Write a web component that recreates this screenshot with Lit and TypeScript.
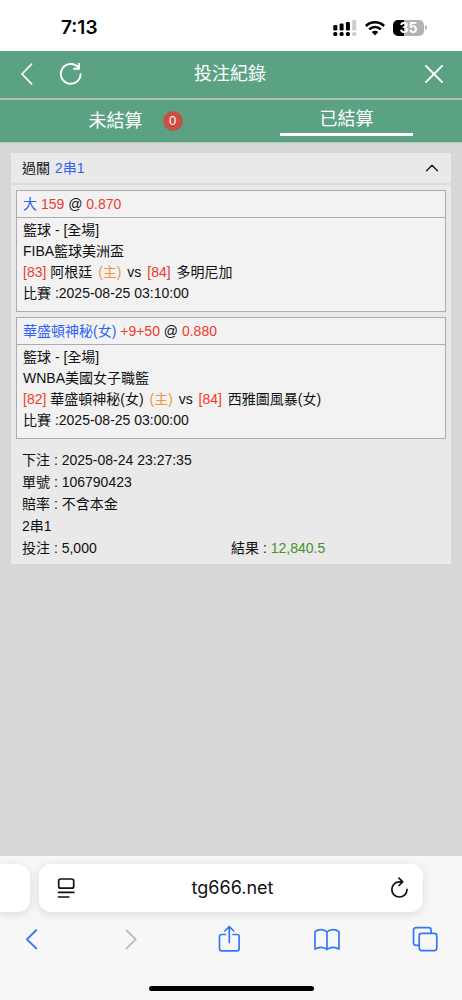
import { LitElement, html, css, svg, nothing } from "lit";
import { customElement, property, state } from "lit/decorators.js";

interface Team {
  no: string;
  name: string;
}

interface Leg {
  pick: string;
  line: string;
  odds: string;
  sport: string;
  league: string;
  home: Team;
  away: Team;
  time: string;
}

const LEGS: Leg[] = [
  {
    pick: "大",
    line: "159",
    odds: "0.870",
    sport: "籃球 - [全場]",
    league: "FIBA籃球美洲盃",
    home: { no: "[83]", name: "阿根廷" },
    away: { no: "[84]", name: "多明尼加" },
    time: "2025-08-25 03:10:00",
  },
  {
    pick: "華盛頓神秘(女)",
    line: "+9+50",
    odds: "0.880",
    sport: "籃球 - [全場]",
    league: "WNBA美國女子職籃",
    home: { no: "[82]", name: "華盛頓神秘(女)" },
    away: { no: "[84]", name: "西雅圖風暴(女)" },
    time: "2025-08-25 03:00:00",
  },
];

const resets = css`
  * {
    box-sizing: border-box;
  }
  button {
    margin: 0;
    padding: 0;
    border: 0;
    background: none;
    font: inherit;
    color: inherit;
    cursor: pointer;
  }
  svg {
    display: block;
    fill: none;
    stroke: currentColor;
    stroke-linecap: round;
    stroke-linejoin: round;
  }
`;

@customElement("status-bar")
class StatusBar extends LitElement {
  static styles = [
    resets,
    css`
      :host {
        display: flex;
        justify-content: space-between;
        align-items: center;
        height: 51px;
        padding: 4px 35px 0 61px;
        background: #fff;
        color: #000;
      }
      .time {
        font: 600 19px/24px Inter, sans-serif;
      }
      .icons {
        display: flex;
        align-items: center;
        gap: 8px;
      }
      .solid {
        fill: currentColor;
        stroke: none;
      }
      .faint {
        fill: #cbcbcb;
      }
      .battery {
        display: flex;
        align-items: center;
        gap: 1px;
      }
      .cell {
        width: 31px;
        height: 16px;
        border-radius: 5px;
        background: linear-gradient(90deg, #000 35%, #b3b3b3 35%);
        color: #fff;
        text-align: center;
        font: 700 14px/16px Inter, sans-serif;
      }
      .nub {
        width: 2px;
        height: 5px;
        border-radius: 0 2px 2px 0;
        background: #b3b3b3;
      }
    `,
  ];

  render() {
    return html`
      <span class="time">7:13</span>
      <span class="icons">
        <svg class="solid" width="24" height="16" viewBox="0 0 24 16" aria-hidden="true">
          <rect x="0.3" y="5" width="4" height="5.4" rx="1.2" />
          <rect x="6.6" y="3.6" width="4" height="6.8" rx="1.2" />
          <rect x="12.9" y="2" width="4" height="8.4" rx="1.2" />
          <rect class="faint" x="19.2" y="0" width="4" height="10.4" rx="1.2" />
          <rect x="0.3" y="12" width="4" height="4" rx="1.5" />
          <rect x="6.6" y="12" width="4" height="4" rx="1.5" />
          <rect x="12.9" y="12" width="4" height="4" rx="1.5" />
          <rect class="faint" x="19.2" y="12" width="4" height="4" rx="1.5" />
        </svg>
        <svg width="20" height="16" viewBox="0 0 20 16" stroke-width="2.6" aria-hidden="true">
          <path stroke-linecap="butt" d="M0.9 6a13 13 0 0 1 18.2 0M4.2 9.4a8.3 8.3 0 0 1 11.6 0" />
          <path class="solid" d="M10 15.4 6.8 12.1a4.6 4.6 0 0 1 6.4 0Z" />
        </svg>
        <span class="battery"><span class="cell">35</span><span class="nub"></span></span>
      </span>
    `;
  }
}

@customElement("bet-leg")
class BetLeg extends LitElement {
  @property({ attribute: false }) leg!: Leg;

  static styles = [
    resets,
    css`
      :host {
        display: block;
        border: 1px solid #acacac;
        background: #f2f2f2;
      }
      .pick {
        padding: 0 6px;
        border-bottom: 1px solid #acacac;
        line-height: 26px;
      }
      .info {
        padding: 2px 6px 7px;
        line-height: 21px;
      }
      .blue {
        color: #2f62f2;
      }
      .red {
        color: #ee3a2d;
      }
      .home {
        margin: 0 2px;
        color: #f0973f;
      }
      .away {
        margin: 0 2px;
      }
    `,
  ];

  render() {
    const l = this.leg;
    return html`
      <div class="pick">
        <span class="blue">${l.pick}</span> <span class="red">${l.line}</span> @
        <span class="red">${l.odds}</span>
      </div>
      <div class="info">
        <div>${l.sport}</div>
        <div>${l.league}</div>
        <div>
          <span class="red">${l.home.no}</span> ${l.home.name}
          <span class="home">(主)</span> vs <span class="red away">${l.away.no}</span>
          ${l.away.name}
        </div>
        <div>比賽 :${l.time}</div>
      </div>
    `;
  }
}

@customElement("browser-bar")
class BrowserBar extends LitElement {
  static styles = [
    resets,
    css`
      :host {
        display: block;
        padding-top: 8px;
        background: #f7f7f7;
        overflow: hidden;
      }
      .address {
        display: flex;
        gap: 9px;
      }
      .tab,
      .field {
        height: 48px;
        background: #fff;
        box-shadow: 0 2px 10px rgba(0, 0, 0, 0.12);
      }
      .tab {
        width: 30px;
        border-radius: 0 12px 12px 0;
      }
      .field {
        display: flex;
        flex: 1;
        align-items: center;
        justify-content: space-between;
        margin-right: 39px;
        padding: 0 14px 0 17px;
        border-radius: 12px;
        color: #111;
      }
      .url {
        font: 400 18px/24px Inter, sans-serif;
      }
      .tools {
        display: flex;
        justify-content: space-between;
        padding: 8px 18px 0 13px;
        color: #3478f6;
      }
      .tool {
        display: grid;
        place-items: center;
        width: 38px;
        height: 38px;
      }
      .tool:disabled {
        color: #bdbdbd;
      }
      .indicator {
        width: 165px;
        height: 5px;
        margin: 28px auto 9px;
        border-radius: 3px;
        background: #000;
      }
    `,
  ];

  private tool(label: string, shape: unknown, disabled = false) {
    return html`<button class="tool" aria-label=${label} ?disabled=${disabled}>
      <svg width="28" height="28" viewBox="0 0 28 28" stroke-width="1.7">${shape}</svg>
    </button>`;
  }

  render() {
    return html`
      <div class="address">
        <div class="tab"></div>
        <div class="field">
          <button aria-label="頁面選單">
            <svg width="20" height="22" viewBox="0 0 20 22" stroke-width="1.7">
              <rect x="2.7" y="2" width="15" height="9.2" rx="2" />
              <path d="M2.5 15.4h15.3M2.5 20h10.3" />
            </svg>
          </button>
          <span class="url">tg666.net</span>
          <button aria-label="重新載入">
            <svg width="20" height="22" viewBox="0 0 20 22" stroke-width="1.7">
              <path d="M18 12.4a7.6 7.6 0 1 1-7.6-7.6h3.2M10 1.2l3.7 3.6-3.7 3.7" />
            </svg>
          </button>
        </div>
      </div>
      <nav class="tools">
        ${this.tool("上一頁", svg`<path stroke-width="2" d="M18.2 5.3 8.9 14.4l9.3 9" />`)}
        ${this.tool("下一頁", svg`<path stroke-width="2" d="M10.5 5.3l9.2 9.1-9.2 9" />`, true)}
        ${this.tool(
          "分享",
          svg`<path d="M10.5 9.5H6.500a2 2 0 0 0-2 2v12.300a2 2 0 0 0 2 2h15.600a2 2 0 0 0 2-2V11.500a2 2 0 0 0-2-2h-4M14.300 17.400V1.700M9.800 6 14.300 1.500l4.500 4.500" />`,
        )}
        ${this.tool(
          "書籤",
          svg`<path d="M14 7C11 3.900 5.500 3.900 2 6.600V24.100c3.500-2.400 9-2.400 12 .4 3-2.800 8.500-2.800 12-.4V6.600C22.500 3.900 17 3.900 14 7ZM14 7V24.500" />`,
        )}
        ${this.tool(
          "分頁",
          svg`<path d="M7.900 20.300H5.100a2.600 2.600 0 0 1-2.600-2.600V5.300a2.600 2.600 0 0 1 2.600-2.600h12.400A2.600 2.600 0 0 1 20.100 5.300v2.800" /><rect x="8.200" y="8.300" width="17.600" height="17.400" rx="2.600" />`,
        )}
      </nav>
      <div class="indicator"></div>
    `;
  }
}

@customElement("app-root")
class AppRoot extends LitElement {
  @state() private open = true;

  static styles = [
    resets,
    css`
      :host {
        display: flex;
        flex-direction: column;
        min-height: 100vh;
        background: #d7d7d7;
        color: #111;
        font: 14px/22px "Liberation Sans", "Noto Sans CJK TC", sans-serif;
      }
      .title-bar {
        display: flex;
        align-items: center;
        justify-content: space-between;
        height: 47px;
        padding: 0 17px 2px 15px;
        background: #5ba283;
        color: #fff;
      }
      .side {
        display: flex;
        flex: 1;
        gap: 20px;
      }
      .side.end {
        justify-content: flex-end;
      }
      .title {
        margin: 0;
        font-size: 18px;
        font-weight: 400;
        line-height: 24px;
      }
      .tabs {
        display: grid;
        grid-template-columns: 1fr 1fr;
        height: 45px;
        border-top: 2px solid #aebfb6;
        border-bottom: 1px solid #b5cabf;
        background: #5ba283;
        color: #fff;
        font-size: 18px;
        line-height: 24px;
      }
      .tab {
        display: flex;
        flex-direction: column;
        align-items: center;
        justify-content: center;
      }
      .tab.active::after {
        content: "";
        width: 58%;
        height: 3px;
        margin-top: 2px;
        background: #fff;
      }
      .label {
        position: relative;
      }
      .badge {
        position: absolute;
        top: 2px;
        left: 100%;
        width: 20px;
        height: 20px;
        margin-left: 20px;
        border-radius: 50%;
        background: #c94f44;
        font-size: 13px;
        line-height: 20px;
        text-align: center;
      }
      .content {
        flex: 1;
        padding: 10px 11px;
      }
      .ticket {
        background: #e9e9e9;
      }
      .summary {
        display: flex;
        align-items: center;
        justify-content: space-between;
        width: 100%;
        height: 32px;
        padding: 0 11px;
        border-bottom: 2px solid #dadada;
      }
      .blue {
        margin-left: 1px;
        color: #2f62f2;
      }
      .legs {
        display: grid;
        gap: 5px;
        padding: 5px 5px 10px;
      }
      .details {
        display: grid;
        grid-template-columns: 1fr 1fr;
        padding-bottom: 5px;
      }
      .row {
        grid-column: 1 / -1;
        padding-left: 11px;
      }
      .stake {
        padding-left: 11px;
      }
      .won {
        color: #43932b;
      }
    `,
  ];

  private toggle() {
    this.open = !this.open;
  }

  render() {
    return html`
      <status-bar></status-bar>
      <header class="title-bar">
        <div class="side">
          <button aria-label="返回">
            <svg width="24" height="24" viewBox="0 0 24 24" stroke-width="1.7">
              <path d="M16.6 2.2 7 12l9.600 9.800" />
            </svg>
          </button>
          <button aria-label="重新整理">
            <svg width="24" height="24" viewBox="0 0 24 24" stroke-width="1.9">
              <path d="M21.600 12.200A9.900 9.900 0 1 1 19.200 5.400" />
              <path d="M20 1.800V6.700H15" />
            </svg>
          </button>
        </div>
        <h1 class="title">投注紀錄</h1>
        <div class="side end">
          <button aria-label="關閉">
            <svg width="22" height="22" viewBox="0 0 22 22" stroke-width="1.8">
              <path d="M3 3l16 16M19 3 3 19" />
            </svg>
          </button>
        </div>
      </header>
      <nav class="tabs">
        <button class="tab"><span class="label">未結算<span class="badge">0</span></span></button>
        <button class="tab active"><span class="label">已結算</span></button>
      </nav>
      <main class="content">
        <section class="ticket">
          <button class="summary" aria-expanded=${this.open} @click=${this.toggle}>
            <span>過關 <span class="blue">2串1</span></span>
            <svg width="16" height="16" viewBox="0 0 16 16" stroke-width="1.3">
              <path d="M2.500 10.800 8 5.300l5.500 5.500" />
            </svg>
          </button>
          ${this.open
            ? html`<div class="legs">
                ${LEGS.map((leg) => html`<bet-leg .leg=${leg}></bet-leg>`)}
              </div>`
            : nothing}
          <div class="details">
            <div class="row">下注 : 2025-08-24 23:27:35</div>
            <div class="row">單號 : 106790423</div>
            <div class="row">賠率 : 不含本金</div>
            <div class="row">2串1</div>
            <div class="stake">投注 : 5,000</div>
            <div>結果 : <span class="won">12,840.5</span></div>
          </div>
        </section>
      </main>
      <browser-bar></browser-bar>
    `;
  }
}
